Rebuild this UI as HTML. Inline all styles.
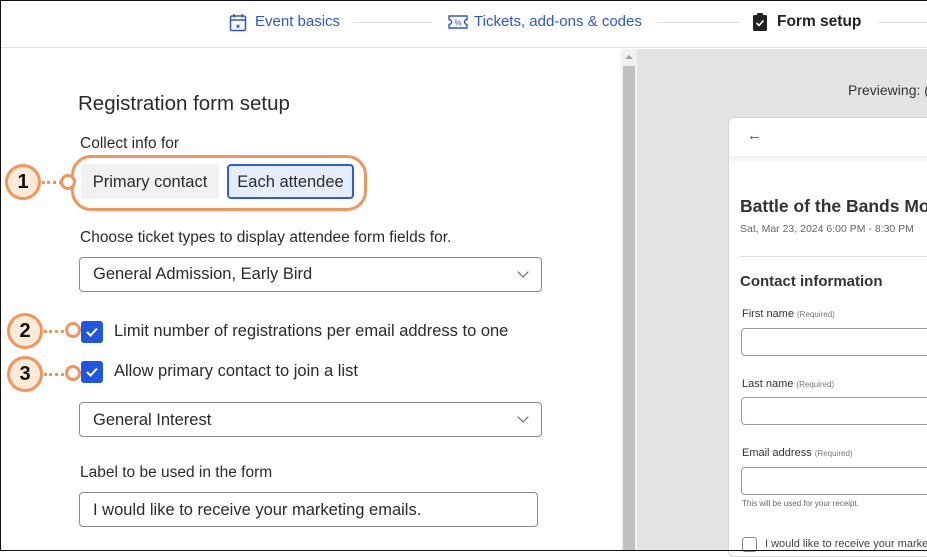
<!DOCTYPE html>
<html><head><style>
*{box-sizing:border-box;margin:0;padding:0}
body{width:927px;height:551px;overflow:hidden;font-family:"Liberation Sans",sans-serif;color:#2b2b2b;position:relative;background:#fff}
.a{position:absolute;white-space:nowrap}
.frame{position:absolute;left:0;top:0;width:927px;height:551px;border:1px solid #111;border-right:none;pointer-events:none}
.blue{color:#2b55d9}
.sel{border:1px solid #8a8a8a;border-radius:4px;background:#fff}
.chev{position:absolute;right:14px;top:14px;width:8px;height:8px;border-right:1.5px solid #555;border-bottom:1.5px solid #555;transform:rotate(45deg)}
.num{position:absolute;width:36px;height:36px;border-radius:50%;border:3px solid #f4945a;background:#fdebd9;font-weight:bold;font-size:20px;text-align:center;line-height:30px;color:#111}
.dot{position:absolute;width:16px;height:16px;border-radius:50%;border:3px solid #f4945a;background:#fff}
.dash{position:absolute;height:0;border-top:3px dotted #f4945a}
.cb{position:absolute;width:22px;height:22px;background:#1f56e0;border-radius:3px}
.lbl{font-size:11px;color:#333}
.req{font-size:8px;color:#777}
.inp{position:absolute;left:741px;width:200px;height:28px;border:1px solid #9a9a9a;border-radius:4px;background:#fff}
.t16{font-size:16.5px}
.t15{font-size:15.5px}
</style></head><body>
<div class="a" style="left:0;top:0;width:927px;height:48px;border-bottom:1px solid #e2e2e2;background:#fff"></div>
<svg class="a" style="left:229px;top:13px" width="18" height="19" viewBox="0 0 18 19"><rect x="1.5" y="3" width="15" height="14.5" rx="1.5" fill="none" stroke="#2b55d9" stroke-width="1.5"/><line x1="1.5" y1="7" x2="16.5" y2="7" stroke="#2b55d9" stroke-width="1.5"/><line x1="5" y1="1" x2="5" y2="4.5" stroke="#2b55d9" stroke-width="1.5"/><line x1="13" y1="1" x2="13" y2="4.5" stroke="#2b55d9" stroke-width="1.5"/><text x="9" y="15.5" font-size="7" text-anchor="middle" fill="#2b55d9">★</text></svg>
<div class="a blue" style="left:255px;top:13px;font-size:15px">Event basics</div>
<div class="a" style="left:353px;top:22px;width:79px;border-top:1px solid #ddd"></div>
<svg class="a" style="left:448px;top:14px" width="20" height="16" viewBox="0 0 20 16"><path d="M1 2h18v3.5a2.5 2.5 0 0 0 0 5V14H1v-3.5a2.5 2.5 0 0 0 0-5z" fill="none" stroke="#2b55d9" stroke-width="1.4"/><text x="10" y="11.5" font-size="8" text-anchor="middle" fill="#2b55d9">%</text></svg>
<div class="a blue" style="left:474px;top:13px;font-size:15px">Tickets, add-ons &amp; codes</div>
<div class="a" style="left:657px;top:22px;width:83px;border-top:1px solid #ddd"></div>
<svg class="a" style="left:752px;top:12px" width="16" height="20" viewBox="0 0 16 20"><rect x="1" y="3" width="14" height="16" rx="1.5" fill="#222"/><rect x="5" y="1" width="6" height="4" rx="1" fill="#222"/><path d="M4.5 11l2.5 2.5 4.5-5" fill="none" stroke="#fff" stroke-width="1.6"/></svg>
<div class="a" style="left:777px;top:13px;font-size:15.5px;font-weight:bold;color:#222">Form setup</div>
<div class="a" style="left:879px;top:22px;width:48px;border-top:1px solid #ddd"></div>

<div class="a" style="left:621px;top:49px;width:16px;height:502px;background:#f1f1f1"></div>
<div class="a" style="left:623px;top:66px;width:12px;height:485px;background:#c1c1c1"></div>
<div class="a" style="left:625px;top:55px;width:0;height:0;border-left:4px solid transparent;border-right:4px solid transparent;border-bottom:4px solid #a0a0a0"></div>
<div class="a" style="left:637px;top:49px;width:290px;height:502px;background:#e3e3e3"></div>
<div class="a" style="left:848px;top:82px;font-size:14px;color:#333">Previewing: (</div>
<div class="a" style="left:728px;top:117px;width:210px;height:440px;background:#fff;border-radius:6px;border:1px solid #d4d4d4"></div>
<div class="a" style="left:729px;top:156px;width:198px;height:8px;background:linear-gradient(#eee,#fff)"></div>
<div class="a" style="left:747px;top:127px;font-size:15px;color:#444">←</div>
<div class="a" style="left:740px;top:196px;font-size:17.5px;font-weight:bold;color:#333">Battle of the Bands Mo</div>
<div class="a" style="left:740px;top:223px;font-size:10.5px;color:#666">Sat, Mar 23, 2024 6:00 PM - 8:30 PM</div>
<div class="a" style="left:740px;top:256px;width:187px;border-top:1px solid #ddd"></div>
<div class="a" style="left:740px;top:273px;font-size:15px;font-weight:bold;color:#333">Contact information</div>
<div class="a lbl" style="left:742px;top:308px">First name <span class="req">(Required)</span></div>
<div class="inp" style="top:328px"></div>
<div class="a lbl" style="left:742px;top:378px">Last name <span class="req">(Required)</span></div>
<div class="inp" style="top:397px"></div>
<div class="a lbl" style="left:742px;top:447px">Email address <span class="req">(Required)</span></div>
<div class="inp" style="top:467px"></div>
<div class="a" style="left:742px;top:499px;font-size:8px;color:#666">This will be used for your receipt.</div>
<div class="a" style="left:742px;top:537px;width:15px;height:15px;border:1px solid #888;border-radius:3px"></div>
<div class="a" style="left:765px;top:538px;font-size:11px;color:#444">I would like to receive your marke</div>

<div class="a" style="left:78px;top:92px;font-size:20.5px;color:#2b2b2b">Registration form setup</div>
<div class="a t15" style="left:80px;top:135px">Collect info for</div>
<div class="a" style="left:71px;top:155px;width:296px;height:56px;border:3px solid #f4945a;border-radius:20px"></div>
<div class="a t16" style="left:81px;top:164px;width:138px;height:35px;background:#f1f1f1;border-radius:4px;line-height:36px;text-align:center">Primary contact</div>
<div class="a t16" style="left:227px;top:164px;width:127px;height:35px;background:#e5ecfc;border:2px solid #2f5be0;border-radius:4px;line-height:32px;text-align:center">Each attendee</div>
<div class="num" style="left:5px;top:164px">1</div>
<div class="dash" style="left:42px;top:181px;width:20px"></div>
<div class="dot" style="left:60px;top:174px"></div>

<div class="a t15" style="left:80px;top:229px">Choose ticket types to display attendee form fields for.</div>
<div class="a sel" style="left:79px;top:257px;width:463px;height:35px"><div style="position:absolute;left:13px;top:7px" class="t16">General Admission, Early Bird</div><div class="chev" style="top:10px"></div></div>

<div class="cb" style="left:81px;top:321px"></div>
<svg class="a" style="left:81px;top:321px" width="22" height="22"><path d="M6 11l3.5 3.5 6.5-7" fill="none" stroke="#fff" stroke-width="2"/></svg>
<div class="a t16" style="left:114px;top:322px">Limit number of registrations per email address to one</div>
<div class="num" style="left:7px;top:313px">2</div>
<div class="dash" style="left:44px;top:330px;width:20px"></div>
<div class="dot" style="left:65px;top:322px"></div>

<div class="cb" style="left:81px;top:361px"></div>
<svg class="a" style="left:81px;top:361px" width="22" height="22"><path d="M6 11l3.5 3.5 6.5-7" fill="none" stroke="#fff" stroke-width="2"/></svg>
<div class="a t16" style="left:114px;top:362px">Allow primary contact to join a list</div>
<div class="num" style="left:7px;top:356px">3</div>
<div class="dash" style="left:44px;top:373px;width:20px"></div>
<div class="dot" style="left:65px;top:365px"></div>

<div class="a sel" style="left:79px;top:402px;width:463px;height:35px"><div style="position:absolute;left:13px;top:8px" class="t16">General Interest</div><div class="chev" style="top:10px"></div></div>
<div class="a t15" style="left:80px;top:464px">Label to be used in the form</div>
<div class="a sel" style="left:79px;top:492px;width:459px;height:35px"><div style="position:absolute;left:13px;top:8px" class="t16">I would like to receive your marketing emails.</div></div>

<div class="frame"></div>
</body></html>
